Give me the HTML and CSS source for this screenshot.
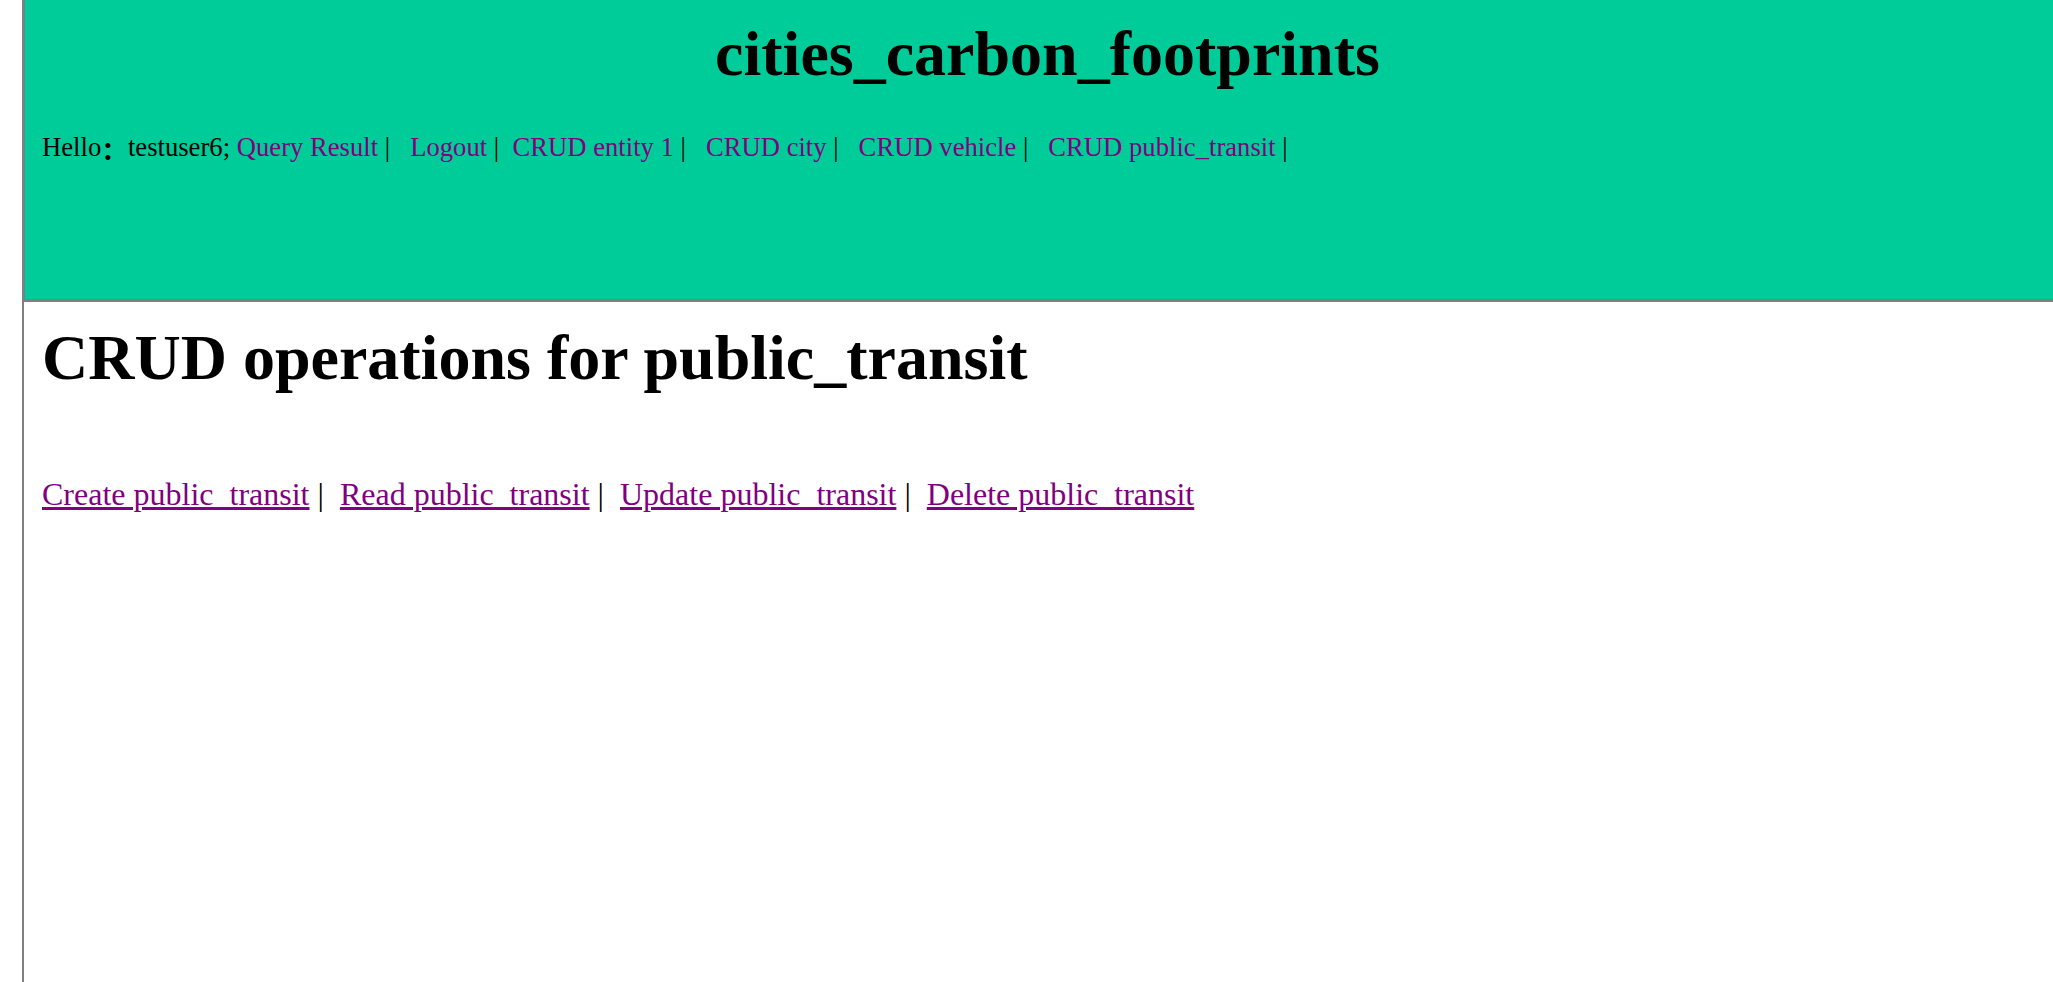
FILE: index.html
```html
<!DOCTYPE html>
<html>
<head>
<meta charset="utf-8">
<title>cities_carbon_footprints</title>
<link rel="stylesheet" href="styles.css">
</head>
<body>
<div class="page">
  <div class="gutter"></div>
  <div class="frame">
    <header class="top">
      <h1 class="title">cities_carbon_footprints</h1>
      <div class="nav">Hello<span class="colon">：</span>testuser6; <a href="#">Query Result</a> |&nbsp;&nbsp; <a href="#">Logout</a> |&nbsp; <a href="#">CRUD entity 1</a> |&nbsp;&nbsp; <a href="#">CRUD city</a> |&nbsp;&nbsp; <a href="#">CRUD vehicle</a> |&nbsp;&nbsp; <a href="#">CRUD public_transit</a> |</div>
    </header>
    <main class="content">
      <h2 class="heading">CRUD operations for public_transit</h2>
      <div class="ops"><a href="#">Create public_transit</a> |&nbsp; <a href="#">Read public_transit</a> |&nbsp; <a href="#">Update public_transit</a> |&nbsp; <a href="#">Delete public_transit</a></div>
    </main>
  </div>
</div>
</body>
</html>
```
FILE: styles.css
```css
html, body {
  margin: 0;
  padding: 0;
  background: #ffffff;
  overflow: hidden;
}
body {
  font-family: "Liberation Serif", "Noto Sans CJK SC", serif;
  color: #000000;
}
.page {
  display: flex;
  min-height: 100vh;
}
.gutter {
  width: 22px;
  flex: none;
}
.frame {
  flex: 1;
  border-left: 2px solid #808080;
  display: flex;
  flex-direction: column;
}
.top {
  background: #00cc99;
  height: 300px;
  box-sizing: border-box;
  border-left: 1px solid #5f86a0;
  border-bottom: 1px solid #5f86a0;
  padding: 17px 0 0 17px;
  box-shadow: 0 2px 0 #808080;
  margin-bottom: 2px;
}
.title {
  margin: 0;
  text-align: center;
  font-size: 64px;
  font-weight: bold;
  line-height: normal;
}
.nav {
  margin-top: 41px;
  font-size: 26.67px;
  line-height: normal;
}
.colon {
  font-family: "Noto Sans CJK SC", sans-serif;
  font-weight: bold;
  line-height: 1;
  vertical-align: -0.15em;
}
.nav a, .ops a {
  color: #800080;
}
.nav a {
  text-decoration: none;
}
.content {
  padding: 0 0 0 18px;
}
.heading {
  margin: 19px 0 0;
  font-size: 64px;
  font-weight: bold;
  line-height: normal;
}
.ops {
  margin-top: 81px;
  font-size: 32px;
  line-height: normal;
}
.ops a {
  text-decoration: underline;
}
```
